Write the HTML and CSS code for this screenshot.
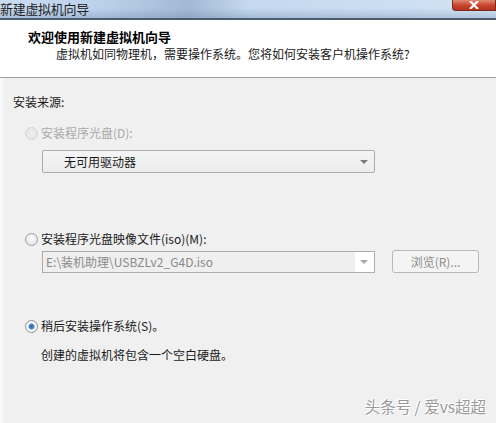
FILE: index.html
```html
<!DOCTYPE html>
<html lang="zh-CN">
<head>
<meta charset="utf-8">
<title>新建虚拟机向导</title>
<link rel="stylesheet" href="styles.css">
</head>
<body>
<div class="window">
  <div class="titlebar">
    <span class="title">新建虚拟机向导</span>
    <span class="close"><svg width="12" height="8" viewBox="0 0 12 8"><path d="M2 0 L10 8 M10 0 L2 8" stroke="#fff" stroke-width="2.2"/></svg></span>
  </div>
  <div class="header">
    <div class="h-title">欢迎使用新建虚拟机向导</div>
    <div class="h-sub">虚拟机如同物理机，需要操作系统。您将如何安装客户机操作系统?</div>
  </div>
  <div class="body">
    <div class="section-label">安装来源:</div>

    <div class="option disabled option-1">
      <span class="radio radio-disabled"></span>
      <span>安装程序光盘(D):</span>
    </div>
    <div class="combo">
      <span class="combo-text">无可用驱动器</span>
      <span class="arrow"></span>
    </div>

    <div class="option option-2">
      <span class="radio"></span>
      <span>安装程序光盘映像文件(iso)(M):</span>
    </div>
    <div class="file-row">
      <div class="file-input">
        <span class="file-text">E:\装机助理\USBZLv2_G4D.iso</span>
        <span class="arrow arrow-light"></span>
      </div>
      <div class="browse">浏览(R)...</div>
    </div>

    <div class="option option-3">
      <span class="radio radio-checked"></span>
      <span>稍后安装操作系统(S)。</span>
    </div>
    <div class="desc">创建的虚拟机将包含一个空白硬盘。</div>

    <div class="watermark">头条号 / 爱vs超超</div>
  </div>
</div>
</body>
</html>
```

FILE: styles.css
```css
* { box-sizing: border-box; }
html, body { margin: 0; padding: 0; }
body {
  font-family: "Noto Sans CJK SC", "Noto Sans", sans-serif;
  font-size: 12px;
  color: #1a1a1a;
  background: #f0f0f0;
}
.window {
  width: 496px;
  height: 423px;
  overflow: hidden;
  display: flex;
  flex-direction: column;
  background: #f0f0f0;
}
.titlebar {
  height: 20px;
  display: flex;
  justify-content: space-between;
  align-items: flex-start;
  background:
    linear-gradient(180deg, rgba(255,255,255,0) 0%, rgba(255,255,255,0) 45%, rgba(110,135,170,0.35) 100%),
    linear-gradient(90deg, #c9dcf1 0%, #bcd2ec 20%, #a3b8d4 38%, #c4d8ee 50%, #d2e3f4 100%);
  border-bottom: 2px solid #4b5b70;
}
.title {
  font-size: 13px;
  line-height: 17px;
  color: #222;
  letter-spacing: -0.3px;
}
.close {
  width: 44px;
  height: 11px;
  margin-left: auto;
  background: linear-gradient(180deg, #e08a74 0%, #c8442c 55%, #b5311c 100%);
  border: 1px solid #7b2a1e;
  border-top: none;
  border-radius: 0 0 0 4px;
  display: flex;
  justify-content: center;
  align-items: flex-end;
}
.close svg { display: block; margin-bottom: 1px; }
.header {
  height: 58px;
  background: #fff;
  border-bottom: 1px solid #a0a0a0;
  padding: 8px 0 0 28px;
}
.h-title {
  font-weight: bold;
  font-size: 13px;
  line-height: 17px;
  color: #000;
}
.h-sub {
  margin-top: 1px;
  padding-left: 28px;
  line-height: 16px;
  color: #1a1a1a;
}
.body {
  position: relative;
  flex: 1;
  padding: 16px 0 0 10px;
  border-left: 3px solid #f7f8f9;
}
.section-label {
  line-height: 16px;
}
.option {
  display: flex;
  align-items: center;
  gap: 3px;
  line-height: 16px;
  padding-left: 12px;
}
.option.disabled { color: #a9a9a9; }
.option-1 { margin-top: 15px; }
.option-2 { margin-top: 58px; }
.option-3 { margin-top: 45px; }
.radio {
  width: 13px;
  height: 13px;
  border-radius: 50%;
  border: 1px solid #9aa0a6;
  background: radial-gradient(circle at 50% 40%, #ffffff 0%, #e6e6e6 70%, #d6d6d6 100%);
  flex: none;
}
.radio-disabled {
  border-color: #d4d4d4;
  background: radial-gradient(circle, #eeeeee 0%, #e2e2e2 100%);
}
.radio-checked {
  background: radial-gradient(circle, #2a5e9c 0%, #4f86c3 28%, #7fb0e0 38%, #ffffff 44%, #e8e8e8 100%);
  border-color: #8a9099;
}
.combo {
  margin: 9px 0 0 29px;
  width: 333px;
  height: 23px;
  border: 1px solid #acacac;
  border-radius: 2px;
  background: linear-gradient(180deg, #f5f5f5, #ececec);
  display: flex;
  align-items: center;
  justify-content: space-between;
  padding: 0 6px 0 21px;
}
.combo-text { color: #1a1a1a; line-height: 16px; }
.arrow {
  width: 0;
  height: 0;
  border-left: 4px solid transparent;
  border-right: 4px solid transparent;
  border-top: 4px solid #7a7a7a;
}
.arrow-light { border-top-color: #a6a6a6; }
.file-row {
  margin: 3px 0 0 29px;
  display: flex;
  align-items: flex-start;
  gap: 17px;
}
.file-input {
  width: 333px;
  height: 22px;
  margin-top: 1px;
  border: 1px solid #acacac;
  background: linear-gradient(90deg, #efefef 0, #efefef 312px, #ffffff 312px);
  display: flex;
  align-items: center;
  justify-content: space-between;
  padding: 0 6px 0 3px;
}
.file-text { color: #8a8a8a; line-height: 16px; }
.browse {
  width: 87px;
  height: 23px;
  border: 1px solid #b8b8b8;
  border-radius: 3px;
  background: #f4f4f4;
  color: #8c8c8c;
  display: flex;
  align-items: center;
  justify-content: center;
  line-height: 16px;
}
.desc {
  margin-top: 13px;
  padding-left: 28px;
  line-height: 16px;
}
.watermark {
  position: absolute;
  right: 10px;
  bottom: 8px;
  font-size: 15.5px;
  line-height: 18px;
  color: #9a9a9a;
  text-shadow: 1px 1px 0 #fff, -1px -1px 0 #fff;
}
```
